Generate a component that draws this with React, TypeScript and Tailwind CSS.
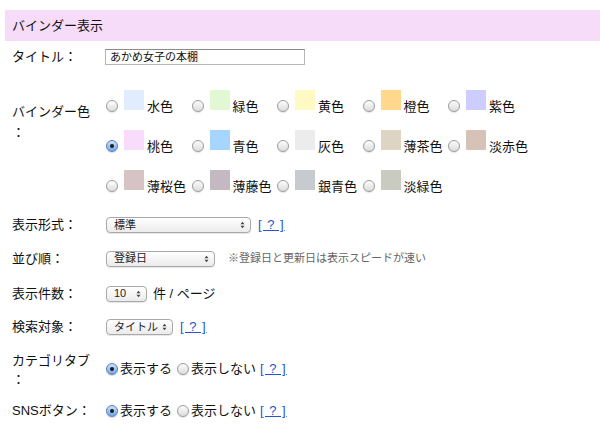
import React from "react";

const COLORS: { name: string; hex: string }[] = [
  { name: "水色", hex: "#e1ecfe" },
  { name: "緑色", hex: "#e2f7d4" },
  { name: "黄色", hex: "#fff9c4" },
  { name: "橙色", hex: "#ffd88e" },
  { name: "紫色", hex: "#cdcdff" },
  { name: "桃色", hex: "#f9dcfb" },
  { name: "青色", hex: "#a6d5fd" },
  { name: "灰色", hex: "#ececec" },
  { name: "薄茶色", hex: "#ddd4c4" },
  { name: "淡赤色", hex: "#d6c2b6" },
  { name: "薄桜色", hex: "#d6c4c4" },
  { name: "薄藤色", hex: "#c4b9c2" },
  { name: "銀青色", hex: "#c6cbd0" },
  { name: "淡緑色", hex: "#c9cbc0" },
];

function Radio({ checked }: { checked?: boolean }) {
  if (checked) {
    return (
      <span className="w-[12px] h-[12px] rounded-full border border-[#5a7fb8] bg-gradient-to-b from-[#cfe3fb] to-[#6ea6e8] flex items-center justify-center shrink-0 shadow-[0_1px_1px_rgba(0,0,0,0.15)]">
        <span className="w-[4px] h-[4px] rounded-full bg-[#1a1a1a]" />
      </span>
    );
  }
  return (
    <span className="w-[12px] h-[12px] rounded-full border border-[#9c9c9c] bg-gradient-to-b from-[#fdfdfd] to-[#dcdcdc] shrink-0 shadow-[0_1px_1px_rgba(0,0,0,0.12)]" />
  );
}

function Select({ value, width }: { value: string; width: string }) {
  return (
    <div
      className={`${width} h-[16px] rounded-[4px] border border-[#a9a9a9] bg-gradient-to-b from-white to-[#ebebeb] shadow-[0_1px_1px_rgba(0,0,0,0.1)] flex items-center justify-between pl-[7px] pr-[5px] text-[11px] text-[#222] shrink-0`}
    >
      <span className="leading-none">{value}</span>
      <svg width="5" height="8" viewBox="0 0 5 8" className="shrink-0">
        <path d="M0.5 3.2 L2.5 0.8 L4.5 3.2 Z" fill="#444" />
        <path d="M0.5 4.8 L2.5 7.2 L4.5 4.8 Z" fill="#444" />
      </svg>
    </div>
  );
}

function Help({ ml = "ml-[7px]" }: { ml?: string }) {
  return <span className={`text-[#2255cc] underline tracking-[1px] ${ml}`}>[ ? ]</span>;
}

export default function App() {
  return (
    <div className="w-[600px] h-[430px] bg-white pl-[5px] pt-[10px] text-[13px] text-[#111] font-['Liberation_Sans','Noto_Sans_CJK_JP',sans-serif] overflow-hidden">
      <div className="h-[31px] bg-[#f7dcf9] flex items-center pl-[7px]">バインダー表示</div>

      <div className="flex items-center h-[32px] pl-[7px]">
        <div className="w-[93px]">タイトル：</div>
        <div className="w-[200px] h-[16px] border border-[#b5b5b5] border-t-[#8a8a8a] pl-[4px] text-[11px] flex items-center">
          あかめ女子の本棚
        </div>
      </div>

      {/* バインダー色 */}
      <div className="flex pl-[7px]">
        <div className="w-[94px] pt-[28px] leading-[21px]">
          <div>バインダー色</div>
          <div>：</div>
        </div>
        <div className="grid grid-cols-[repeat(5,85.5px)] gap-y-[18px] pt-[17px]">
          {COLORS.map((c, i) => (
            <div key={c.name} className="flex items-end h-[22px] whitespace-nowrap">
              <Radio checked={i === 5} />
              <span className="w-[20px] h-[20px] ml-[6px] mb-[2px] shrink-0" style={{ background: c.hex }} />
              <span className="ml-[3px] leading-[14px] mb-[-2px]">{c.name}</span>
            </div>
          ))}
        </div>
      </div>

      <div className="flex items-center h-[34px] mt-[16px] pl-[7px]">
        <div className="w-[94px]">表示形式：</div>
        <Select value="標準" width="w-[145px]" />
        <Help />
      </div>

      <div className="flex items-center h-[33px] pl-[7px]">
        <div className="w-[94px]">並び順：</div>
        <Select value="登録日" width="w-[109px]" />
        <span className="ml-[13px] text-[11px] text-[#666]">※登録日と更新日は表示スピードが速い</span>
      </div>

      <div className="flex items-center h-[37px] pl-[7px]">
        <div className="w-[94px]">表示件数：</div>
        <Select value="10" width="w-[41px]" />
        <span className="ml-[6px]">件 / ページ</span>
      </div>

      <div className="flex items-center h-[30px] pl-[7px]">
        <div className="w-[94px]">検索対象：</div>
        <Select value="タイトル" width="w-[67px]" />
        <Help />
      </div>

      <div className="flex items-center h-[54px] pl-[7px]">
        <div className="w-[94px] leading-[19px] pt-[1px]">
          <div>カテゴリタブ</div>
          <div>：</div>
        </div>
        <Radio checked />
        <span className="ml-[2px]">表示する</span>
        <span className="ml-[5px] flex items-center">
          <Radio />
        </span>
        <span className="ml-[2px]">表示しない</span>
        <Help ml="ml-[4px]" />
      </div>

      <div className="flex items-center h-[30px] pl-[7px]">
        <div className="w-[94px]">SNSボタン：</div>
        <Radio checked />
        <span className="ml-[2px]">表示する</span>
        <span className="ml-[5px] flex items-center">
          <Radio />
        </span>
        <span className="ml-[2px]">表示しない</span>
        <Help ml="ml-[4px]" />
      </div>
    </div>
  );
}
